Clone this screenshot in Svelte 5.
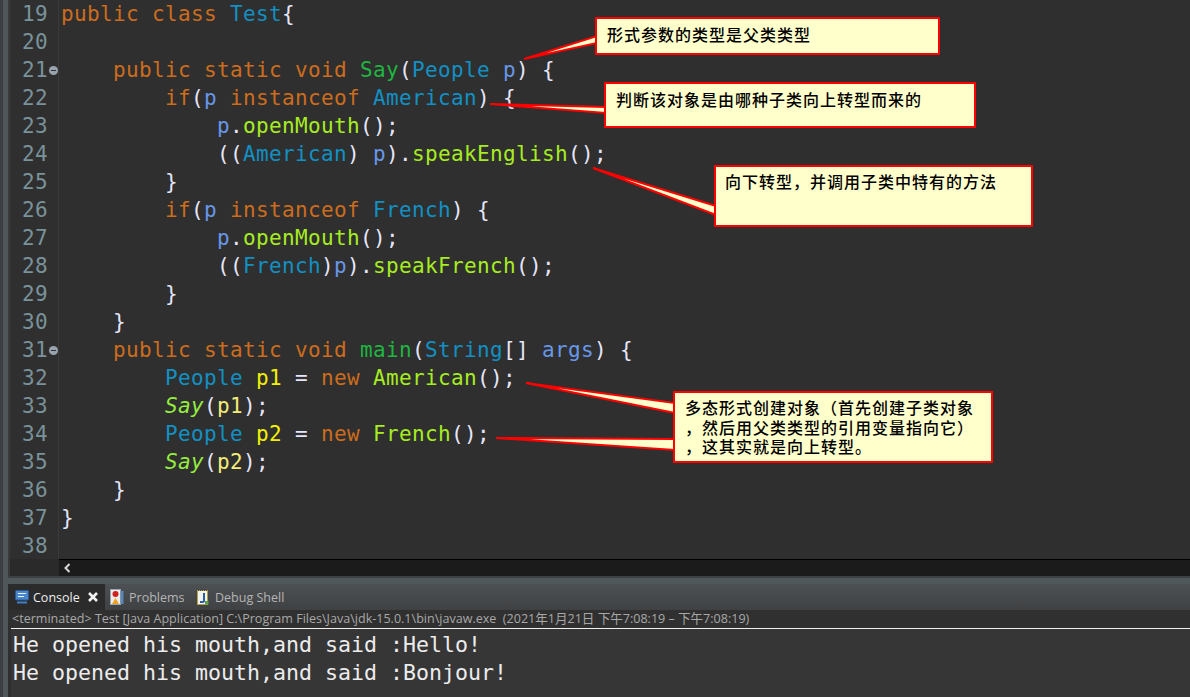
<script>
  const k = 'kw', t = 'ty', d = 'decl', m = 'call', v = 'var', s = 'stat', n = 'pl', l = 'loc', a = 'arg';
  const code = [
    [19, 0, [[k,'public class '],[t,'Test'],[n,'{']]],
    [20, 0, []],
    [21, 1, [[k,'    public static void '],[d,'Say'],[n,'('],[t,'People'],[n,' '],[v,'p'],[n,') {']]],
    [22, 0, [[k,'        if'],[n,'('],[v,'p'],[k,' instanceof '],[t,'American'],[n,') {']]],
    [23, 0, [[n,'            '],[v,'p'],[n,'.'],[m,'openMouth'],[n,'();']]],
    [24, 0, [[n,'            (('],[t,'American'],[n,') '],[v,'p'],[n,').'],[m,'speakEnglish'],[n,'();']]],
    [25, 0, [[n,'        }']]],
    [26, 0, [[k,'        if'],[n,'('],[v,'p'],[k,' instanceof '],[t,'French'],[n,') {']]],
    [27, 0, [[n,'            '],[v,'p'],[n,'.'],[m,'openMouth'],[n,'();']]],
    [28, 0, [[n,'            (('],[t,'French'],[n,')'],[v,'p'],[n,').'],[m,'speakFrench'],[n,'();']]],
    [29, 0, [[n,'        }']]],
    [30, 0, [[n,'    }']]],
    [31, 1, [[k,'    public static void '],[d,'main'],[n,'('],[t,'String'],[n,'[] '],[v,'args'],[n,') {']]],
    [32, 0, [[n,'        '],[t,'People'],[n,' '],[l,'p1'],[n,' = '],[k,'new '],[m,'American'],[n,'();']]],
    [33, 0, [[n,'        '],[s,'Say'],[n,'('],[a,'p1'],[n,');']]],
    [34, 0, [[n,'        '],[t,'People'],[n,' '],[l,'p2'],[n,' = '],[k,'new '],[m,'French'],[n,'();']]],
    [35, 0, [[n,'        '],[s,'Say'],[n,'('],[a,'p2'],[n,');']]],
    [36, 0, [[n,'    }']]],
    [37, 0, [[n,'}']]],
    [38, 0, []]
  ];
  const tails = [
    '524,59 597,36 597,43',
    '490,104 606,107 606,113',
    '593,168 716,206 716,215',
    '526,383 675,403 675,413',
    '496,438 675,439 675,450'
  ];
  const notes = [
    { cls: 'n1', lines: ['形式参数的类型是父类类型'] },
    { cls: 'n2', lines: ['判断该对象是由哪种子类向上转型而来的'] },
    { cls: 'n3', lines: ['向下转型，并调用子类中特有的方法'] },
    { cls: 'n4', lines: ['多态形式创建对象（首先创建子类对象', '，然后用父类类型的引用变量指向它）', '，这其实就是向上转型。'] }
  ];
</script>

<div class="shell">
  <div class="strip"></div>
  <div class="main">
    <section class="editor">
      <div class="lines">
        {#each code as [num, fold, toks]}
          <div class="line">
            <span class="num">{num}</span>
            <span class="fold">{#if fold}<i></i>{/if}</span>
            <span class="src">{#each toks as [c, txt]}<span class={c}>{txt}</span>{/each}</span>
          </div>
        {/each}
      </div>
      <div class="hscroll"><span class="gap"></span><div class="track"><svg width="8" height="10" viewBox="0 0 8 10"><path d="M6.500 1 2.500 5l4 4" fill="none" stroke="#d8d8d8" stroke-width="2"/></svg></div></div>
    </section>
    <div class="sash"></div>
    <section class="views">
      <div class="tabs">
        <div class="tab active">
          <svg width="14" height="14" viewBox="0 0 14 14"><rect x="0.500" y="0.500" width="13" height="9.500" rx="1" fill="#4a86cc" stroke="#2a5a96"/><path d="M3 3.500h8M3 6.500h6" stroke="#e8f0fa"/><path d="M2 12.500h10" stroke="#3f7fc4" stroke-width="2"/></svg>
          <span class="lbl">Console</span>
          <svg class="close" width="10" height="10" viewBox="0 0 10 10"><path d="M1 1l8 8M9 1l-8 8" stroke="#f2f2f2" stroke-width="2.600"/></svg>
        </div>
        <div class="tab t2">
          <svg width="14" height="16" viewBox="0 0 14 16"><rect x="0.500" y="0.500" width="10" height="15" fill="#ececec" stroke="#9aa7b5"/><rect x="10.500" y="2" width="3" height="13" fill="#5a86b5"/><circle cx="5.500" cy="5" r="3" fill="#d02020"/><path d="M2 15l3.500-6 3.500 6z" fill="#efa020"/></svg>
          <span>Problems</span>
        </div>
        <div class="tab t3">
          <svg width="12" height="16" viewBox="0 0 12 16"><rect x="0.500" y="1.500" width="10" height="14" fill="#f4f4ee" stroke="#b8a040"/><path d="M1 1h10" stroke="#444" stroke-dasharray="1 1" stroke-width="2"/><path d="M7 4v7.500Q7 13 5.500 13H3" fill="none" stroke="#2b5fa8" stroke-width="2"/><rect x="8" y="12" width="3.500" height="3.500" fill="#59a14a"/></svg>
          <span>Debug Shell</span>
        </div>
      </div>
      <div class="status">&lt;terminated&gt; Test [Java Application] C:\Program Files\Java\jdk-15.0.1\bin\javaw.exe&nbsp; (2021年1月21日 下午7:08:19 – 下午7:08:19)</div>
      <pre class="out">He opened his mouth,and said :Hello!
He opened his mouth,and said :Bonjour!</pre>
    </section>
  </div>

  <svg class="tails" width="1190" height="697" viewBox="0 0 1190 697">
    {#each tails as p}
      <polygon points={p} fill="#ffffcc" stroke="#ff0000" stroke-width="2"/>
    {/each}
  </svg>
  {#each notes as note}
    <div class="note {note.cls}">
      {#each note.lines as ln}<div>{ln}</div>{/each}
    </div>
  {/each}
</div>

<style>
  :global(body) { margin: 0; background: #2f2f2f; }
  .shell { position: relative; display: flex; width: 1190px; height: 697px; overflow: hidden; background: #2f2f2f; }
  .strip { width: 8px; flex: none; background: linear-gradient(90deg, #3c4042 0 3px, #50575a 3px); }
  .main { flex: 1; display: flex; flex-direction: column; min-width: 0; }
  .editor { height: 576px; flex: none; display: flex; flex-direction: column; background: #2f2f2f; border-left: 2px solid #3a3a3a; box-sizing: border-box; }
  .lines { height: 559px; flex: none; }
  .line { height: 28px; display: flex; font: 21px/28px "DejaVu Sans Mono", monospace; letter-spacing: 0.358px; }
  .num { width: 38px; flex: none; text-align: right; color: #7a929a; }
  .fold { width: 10px; flex: none; display: flex; align-items: center; justify-content: center; }
  .fold i { width: 9px; height: 9px; border-radius: 50%; background: #98a3ad; position: relative; }
  .fold i::after { content: ""; position: absolute; left: 2px; right: 2px; top: 4px; height: 1px; background: #2f2f2f; }
  .src { white-space: pre; border-left: 1px solid #3a3a3a; padding-left: 2px; flex: 1; }
  .kw { color: #cc6c1d; }
  .ty { color: #1290c3; }
  .decl { color: #1eb540; }
  .call { color: #a7ec21; }
  .stat { color: #96ec3f; font-style: italic; }
  .var { color: #6897ea; }
  .loc { color: #f2f200; }
  .arg { color: #f3ec79; }
  .pl { color: #e6e6fa; }
  .hscroll { height: 17px; display: flex; flex: none; background: #2a2a2a; }
  .gap { width: 49px; flex: none; }
  .track { flex: 1; background: #1b1b1b; border-top: 1px solid #000; display: flex; align-items: center; padding-left: 4px; }
  .sash { height: 8px; flex: none; background: linear-gradient(#3c4042 0 2px, #50575a 2px); }
  .views { flex: 1; display: flex; flex-direction: column; min-height: 0; }
  .tabs { height: 26px; flex: none; display: flex; background: linear-gradient(#4d5153, #3f4143); font: 12.5px/26px "Open Sans", "Liberation Sans", sans-serif; color: #b5b5b5; }
  .tab { display: flex; align-items: center; flex: none; }
  .tab span { padding-top: 2px; }
  .tab svg { flex: none; }
  .tab.active { background: #2b2b2b; color: #eeeeee; width: 97px; box-sizing: border-box; padding-left: 7px; gap: 4px; }
  .t2 { margin-left: 5px; width: 87px; gap: 5px; }
  .t3 { gap: 6px; }
  .close { margin-left: 4px; }
  .status { height: 18px; flex: none; box-sizing: border-box; margin-left: 2px; padding-left: 2px; background: #303030; color: #a8a8a8; font: 12.55px/17px "Open Sans", "Noto Sans CJK SC", sans-serif; white-space: nowrap; }
  .out { margin: 0; flex: 1; border-top: 1px solid #f0f0f0; margin-left: 3px; padding: 2px 0 0 2px; background: #363636; color: #ececec; font: 21.6px/28px "DejaVu Sans Mono", monospace; }
  .tails { position: absolute; left: 0; top: 0; pointer-events: none; }
  .note { position: absolute; box-sizing: border-box; background: #ffffcc; border: 2px solid #ff0000; color: #000; font: 500 16px/20px "Noto Sans CJK SC", sans-serif; letter-spacing: 1px; }
  .n1 { left: 595px; top: 17px; width: 345px; height: 38px; padding: 5px 0 0 10px; }
  .n2 { left: 604px; top: 82px; width: 372px; height: 46px; padding: 5px 0 0 10px; }
  .n3 { left: 714px; top: 165px; width: 319px; height: 62px; padding: 4px 0 0 9px; }
  .n4 { left: 673px; top: 391px; width: 320px; height: 72px; padding: 5px 0 0 10px; line-height: 19.500px; }
</style>
